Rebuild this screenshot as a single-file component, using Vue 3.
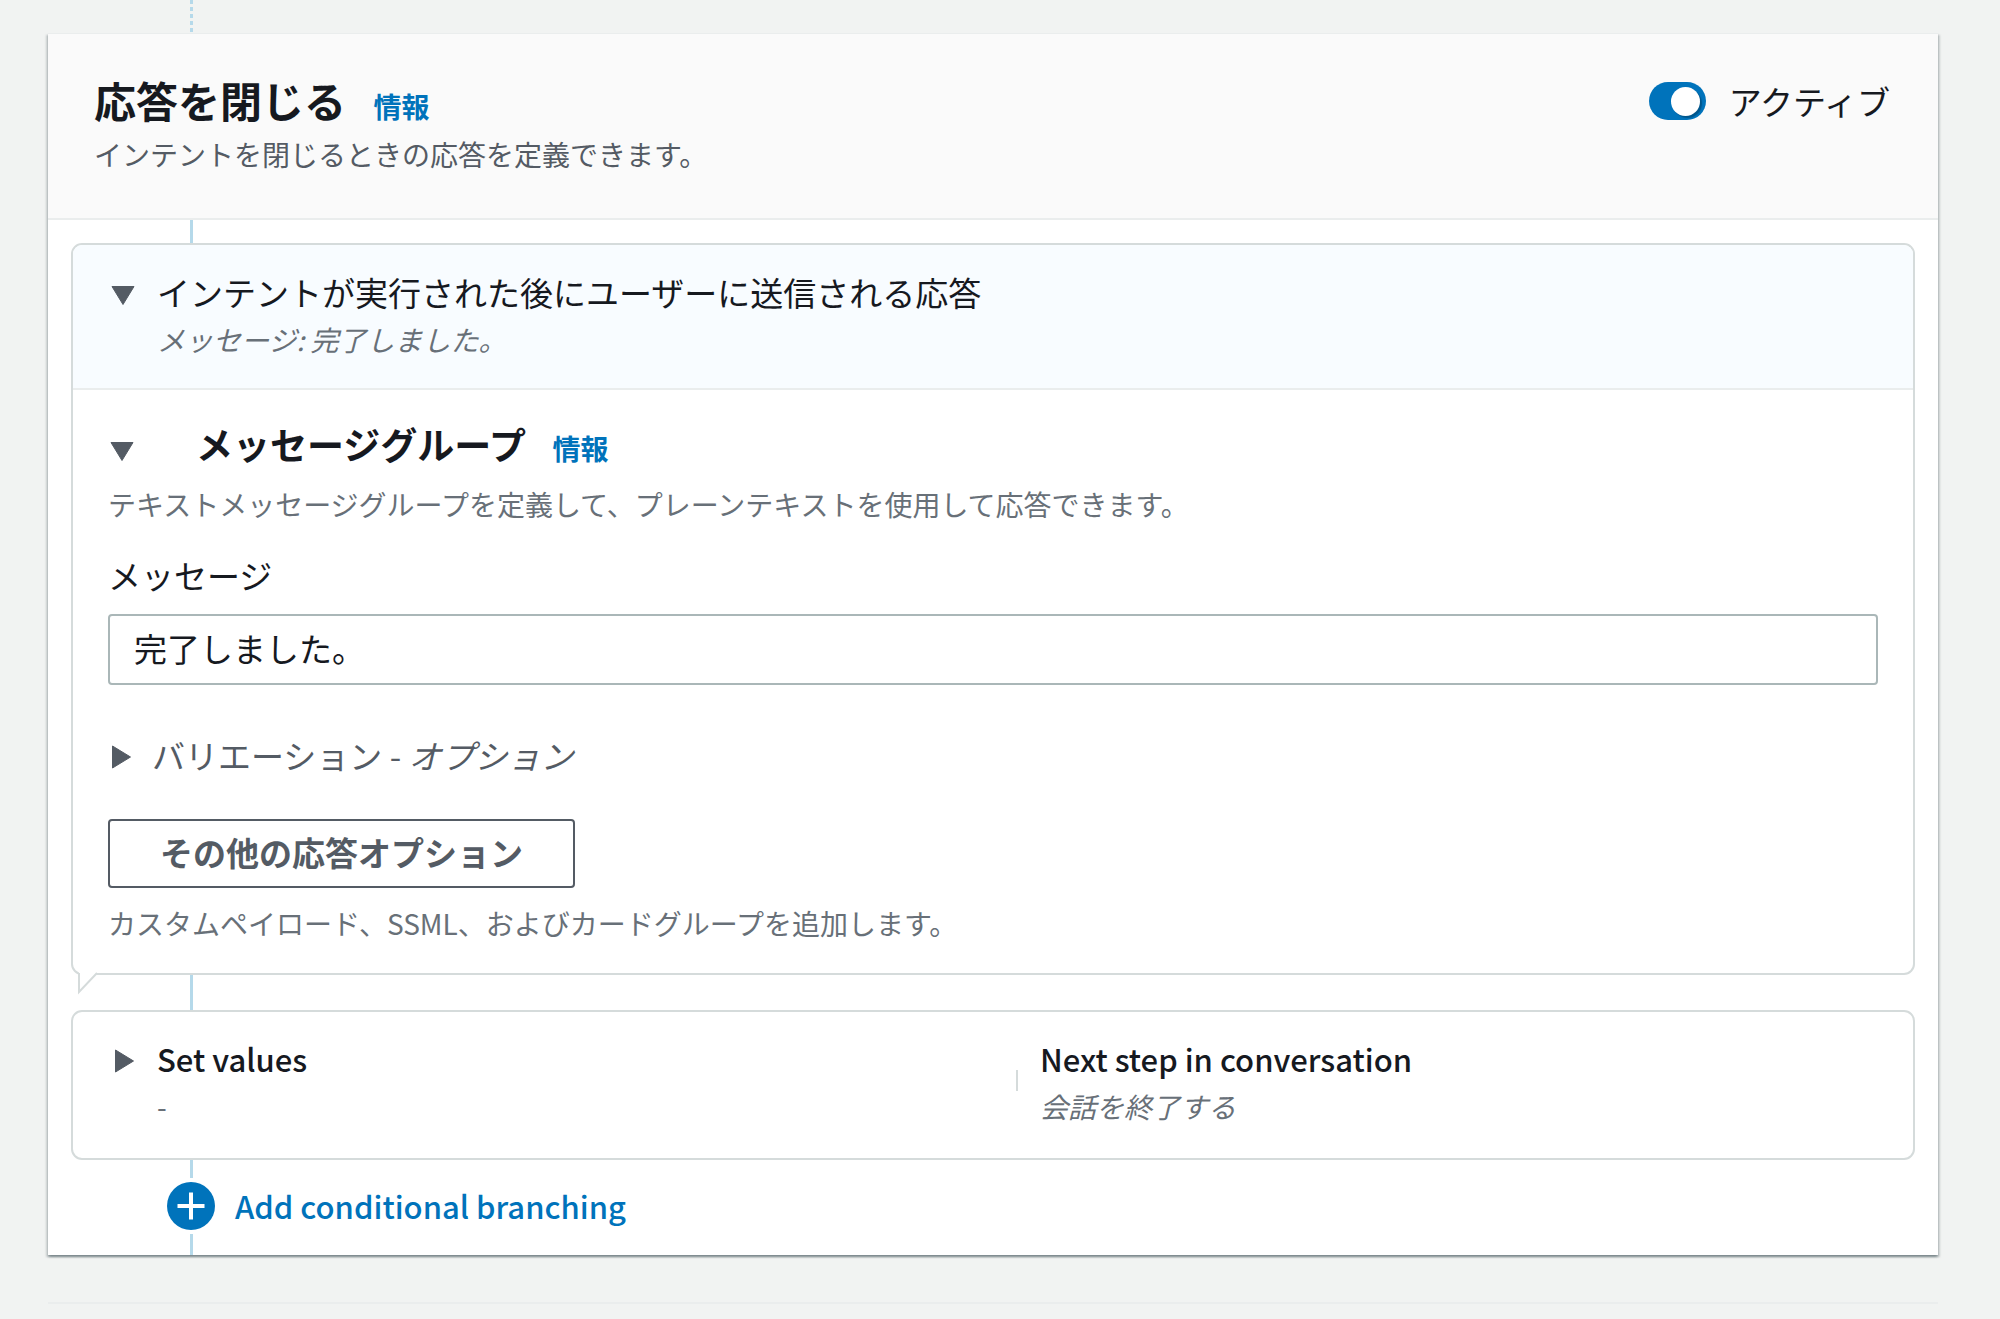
<script setup>
import { ref } from 'vue'

const active = ref(true)
const responseOpen = ref(true)
const groupOpen = ref(true)
const variationsOpen = ref(false)
const valuesOpen = ref(false)
const message = ref('完了しました。')
</script>

<template>
  <main class="page">
    <div class="rail rail-dotted"></div>

    <section class="card">
      <header class="card-header">
        <div class="card-heading">
          <h2 class="card-title">応答を閉じる <a class="info" href="#">情報</a></h2>
          <p class="hint">インテントを閉じるときの応答を定義できます。</p>
        </div>
        <label class="toggle">
          <input v-model="active" class="switch" type="checkbox" role="switch" />
          <span>アクティブ</span>
        </label>
      </header>

      <div class="flow">
        <div class="rail rail-first"></div>

        <section class="panel">
          <div class="panel-header tinted">
            <button
              class="caret"
              :class="{ open: responseOpen }"
              type="button"
              aria-label="応答"
              :aria-expanded="responseOpen"
              @click="responseOpen = !responseOpen"
            >
              <svg viewBox="0 0 24 24"><path d="M4.500 1 22.500 12 4.500 23Z" /></svg>
            </button>
            <div>
              <h3 class="panel-title">インテントが実行された後にユーザーに送信される応答</h3>
              <p class="summary">メッセージ: {{ message }}</p>
            </div>
          </div>

          <div v-if="responseOpen" class="panel-body">
            <div class="group-heading">
              <button
                class="caret"
                :class="{ open: groupOpen }"
                type="button"
                aria-label="メッセージグループ"
                :aria-expanded="groupOpen"
                @click="groupOpen = !groupOpen"
              >
                <svg viewBox="0 0 24 24"><path d="M4.500 1 22.500 12 4.500 23Z" /></svg>
              </button>
              <h3 class="group-title">メッセージグループ <a class="info" href="#">情報</a></h3>
            </div>
            <p class="hint group-hint">テキストメッセージグループを定義して、プレーンテキストを使用して応答できます。</p>

            <label class="field-label" for="message">メッセージ</label>
            <input id="message" v-model="message" class="field" type="text" />

            <button
              class="variations"
              type="button"
              :aria-expanded="variationsOpen"
              @click="variationsOpen = !variationsOpen"
            >
              <span class="caret" :class="{ open: variationsOpen }">
                <svg viewBox="0 0 24 24"><path d="M4.500 1 22.500 12 4.500 23Z" /></svg>
              </span>
              <span>バリエーション - <em>オプション</em></span>
            </button>

            <button class="more" type="button">その他の応答オプション</button>
            <p class="hint more-hint">カスタムペイロード、SSML、およびカードグループを追加します。</p>
          </div>

          <svg class="tail" viewBox="0 0 22 24" aria-hidden="true">
            <path class="tail-fill" d="M2 0H21L3 19Z" />
            <path class="tail-line" d="M2 1V20L20 1" />
          </svg>
        </section>

        <div class="rail rail-between"></div>

        <section class="panel">
          <div class="panel-header">
            <button
              class="caret"
              :class="{ open: valuesOpen }"
              type="button"
              aria-label="Set values"
              :aria-expanded="valuesOpen"
              @click="valuesOpen = !valuesOpen"
            >
              <svg viewBox="0 0 24 24"><path d="M4.500 1 22.500 12 4.500 23Z" /></svg>
            </button>
            <div class="columns">
              <div>
                <h3 class="panel-title latin">Set values</h3>
                <p class="summary plain">-</p>
              </div>
              <span class="divider"></span>
              <div>
                <h3 class="panel-title latin">Next step in conversation</h3>
                <p class="summary">会話を終了する</p>
              </div>
            </div>
          </div>
        </section>

        <div class="rail rail-short"></div>
        <button class="add" type="button">
          <svg class="plus" viewBox="0 0 48 48" aria-hidden="true">
            <circle cx="24" cy="24" r="24" />
            <path d="M24 10.500V37.500M10.500 24H37.500" />
          </svg>
          <span class="latin">Add conditional branching</span>
        </button>
        <div class="rail rail-last"></div>
      </div>
    </section>

    <div class="next-edge"></div>
  </main>
</template>

<style>
body {
  margin: 0;
  background: #f1f3f2;
}
</style>

<style scoped>
.page {
  box-sizing: border-box;
  padding: 0 62px 14px 48px;
  overflow: hidden;
  color: #16191f;
  font-family: "Noto Sans CJK JP", sans-serif;
  font-size: 33px;
  line-height: 46px;
}

h2,
h3,
p {
  margin: 0;
}

button {
  padding: 0;
  border: 0;
  background: none;
  color: inherit;
  font: inherit;
  cursor: pointer;
}

.rail {
  width: 3px;
  margin-left: 142px;
  background: #b5d9ea;
}

.rail-dotted {
  height: 33px;
  background: repeating-linear-gradient(#b5d9ea 0 4px, transparent 4px 7px);
}

.card {
  border-top: 1px solid #eaeded;
  background: #fff;
  box-shadow:
    0 2px 2px rgba(0, 28, 36, 0.3),
    2px 2px 2px rgba(0, 28, 36, 0.15),
    -2px 2px 2px rgba(0, 28, 36, 0.15);
}

.card-header {
  display: flex;
  justify-content: space-between;
  padding: 40px 48px 46px 46px;
  border-bottom: 2px solid #eaeded;
  background: #fafafa;
}

.card-title {
  font-size: 42px;
  font-weight: 700;
  line-height: 52px;
}

.info {
  margin-left: 18px;
  color: #0073bb;
  font-size: 28px;
  font-weight: 700;
  line-height: 28px;
  text-decoration: none;
}

.hint {
  color: #687078;
  font-size: 28px;
  line-height: 36px;
}

.card-heading .hint {
  margin-top: 10px;
  color: #545b64;
}

.toggle {
  display: flex;
  align-items: center;
  gap: 23px;
  height: 54px;
}

.switch {
  display: flex;
  align-items: center;
  box-sizing: border-box;
  width: 57px;
  height: 38px;
  margin: 0;
  padding: 0 6px;
  border-radius: 19px;
  background: #687078;
  appearance: none;
}

.switch::before {
  width: 29px;
  height: 29px;
  border-radius: 50%;
  background: #fff;
  box-shadow: 2px 2px 1px rgba(0, 0, 0, 0.25);
  content: "";
}

.switch:checked {
  justify-content: flex-end;
  background: #0073bb;
}

.flow {
  padding: 0 23px;
}

.flow .rail {
  margin-left: 119px;
}

.rail-first {
  height: 23px;
}

.rail-between {
  height: 35px;
}

.rail-short {
  height: 18px;
}

.rail-last {
  height: 21px;
}

.panel {
  position: relative;
  border: 2px solid #d5dbdb;
  border-radius: 11px;
}

.panel-header {
  display: flex;
  align-items: flex-start;
  gap: 22px;
  padding: 24px 36px 34px 38px;
}

.tinted {
  padding-bottom: 31px;
  border-bottom: 2px solid #eaeded;
  border-radius: 9px 9px 0 0;
  background: #f8fcff;
}

.caret {
  display: flex;
  flex: none;
  align-items: center;
  width: 24px;
  height: 50px;
}

.caret svg {
  width: 24px;
  height: 24px;
  fill: #545b64;
  stroke: #545b64;
  stroke-linejoin: round;
}

.caret.open svg {
  transform: rotate(90deg);
}

.panel-title {
  font-size: 33px;
  font-weight: 400;
  line-height: 46px;
}

.latin,
.panel-title.latin {
  font-size: 31px;
  font-weight: 500;
}

.summary {
  margin-top: 6px;
  color: #687078;
  font-size: 28px;
  font-style: italic;
  line-height: 36px;
}

.plain {
  font-style: normal;
}

.panel-body {
  display: flex;
  flex-direction: column;
  align-items: flex-start;
  padding: 29px 35px 32px;
}

.group-heading {
  display: flex;
  align-items: flex-end;
  gap: 62px;
  padding-left: 2px;
}

.group-heading .caret {
  height: 38px;
}

.group-title {
  font-size: 37px;
  font-weight: 700;
  line-height: 50px;
}

.group-hint {
  margin-top: 17px;
}

.field-label {
  margin-top: 30px;
}

.field {
  box-sizing: border-box;
  width: 100%;
  height: 71px;
  margin-top: 16px;
  padding: 0 24px 4px;
  border: 2px solid #aab7b8;
  border-radius: 4px;
  background: #fff;
  color: #16191f;
  font: inherit;
}

.variations {
  display: flex;
  align-items: flex-start;
  gap: 20px;
  height: 46px;
  margin-top: 47px;
  color: #545b64;
}

.more {
  height: 69px;
  margin-top: 41px;
  padding: 0 50px 4px;
  border: 2px solid #545b64;
  border-radius: 4px;
  color: #545b64;
  font-weight: 700;
}

.more-hint {
  margin-top: 17px;
}

.tail {
  position: absolute;
  top: calc(100% - 1px);
  left: 4px;
  width: 22px;
  height: 24px;
}

.tail-fill {
  fill: #fff;
}

.tail-line {
  fill: none;
  stroke: #d5dbdb;
  stroke-width: 2;
}

.columns {
  display: grid;
  flex: 1;
  grid-template-columns: 1fr 2px 1fr;
  align-items: center;
  column-gap: 22px;
}

.divider {
  height: 21px;
  background: #d5dbdb;
}

.add {
  display: flex;
  align-items: center;
  gap: 20px;
  height: 56px;
  margin-left: 96px;
  color: #0073bb;
}

.plus {
  width: 48px;
  height: 48px;
  fill: #0073bb;
  stroke: none;
}

.plus path {
  stroke: #fff;
  stroke-width: 4;
}

.next-edge {
  height: 2px;
  margin-top: 47px;
  background: #eaeded;
}
</style>
